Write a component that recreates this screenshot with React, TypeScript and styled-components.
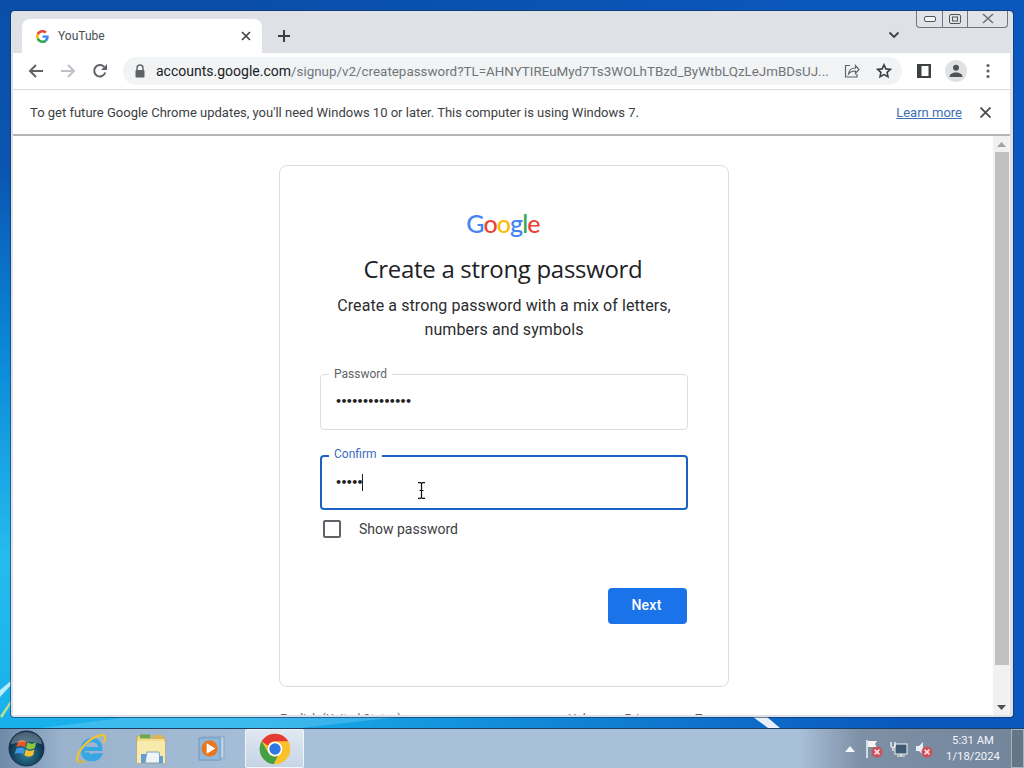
import React from "react";
import styled, { createGlobalStyle } from "styled-components";

const Global = createGlobalStyle`
  html, body { margin: 0; padding: 0; width: 1024px; height: 768px; overflow: hidden; }
  * { box-sizing: border-box; }
  body { font-family: "Roboto", "Liberation Sans", sans-serif; }
`;

const Desktop = styled.div`
  position: relative;
  width: 1024px;
  height: 768px;
  display: flex;
  flex-direction: column;
  overflow: hidden;
  background:
    linear-gradient(90deg, rgba(10,88,190,0) 22%, rgba(10,88,190,1) 88%),
    linear-gradient(180deg, #0a4ea8 0%, #0a55b0 22%, #0a86d6 45%, #25bbee 72%, #15aeea 100%);
`;
const Wallpaper = styled.svg`
  position: absolute;
  left: 0;
  top: 0;
`;
const WindowArea = styled.div`
  position: relative;
  flex: 1;
  min-height: 0;
  padding: 11px;
  display: flex;
`;
const Win = styled.div`
  position: relative;
  flex: 1;
  display: flex;
  flex-direction: column;
  padding: 0 3px 2px 2px;
  border-radius: 4px 4px 3px 3px;
  background: #dfe1e8;
  box-shadow: 0 0 0 1px rgba(20,50,90,.6);
  overflow: hidden;
`;
const TabStrip = styled.div`
  height: 42px;
  display: flex;
  align-items: flex-end;
  padding-left: 9px;
  background: #dee1e6;
  flex: none;
`;
const Tab = styled.div`
  width: 240px;
  height: 34px;
  background: #fff;
  border-radius: 8px 8px 0 0;
  display: flex;
  align-items: center;
  padding: 0 2px 0 14px;
  gap: 9px;
`;
const TabTitle = styled.span`
  flex: 1;
  font: 12px "Roboto", sans-serif;
  color: #4a4d50;
`;
const TabClose = styled.span`
  width: 28px;
  display: flex;
  justify-content: center;
`;
const NewTab = styled.span`
  margin-left: 8px;
  margin-bottom: 3px;
  width: 28px;
  height: 28px;
  display: flex;
  align-items: center;
  justify-content: center;
`;
const TabChevron = styled.span`
  margin-left: auto;
  margin-right: 110px;
  margin-bottom: 12px;
  display: flex;
`;
const WinControls = styled.div`
  position: absolute;
  top: 0;
  right: 5px;
  width: 92px;
  height: 17px;
  display: flex;
  border: 1px solid #6f7680;
  border-top: 0;
  border-radius: 0 0 4px 4px;
  background: rgba(225,228,233,.6);
`;
const WinBtn = styled.span<{ $w: number }>`
  width: ${p => p.$w}px;
  display: flex;
  align-items: center;
  justify-content: center;
  & + & { border-left: 1px solid #6f7680; }
`;
const Toolbar = styled.div`
  height: 37px;
  flex: none;
  background: #fff;
  display: flex;
  align-items: center;
  padding-left: 7px;
  border-bottom: 1px solid #dadce0;
`;
const NavBtn = styled.span`
  width: 32px;
  height: 28px;
  display: flex;
  align-items: center;
  justify-content: center;
`;
const Omnibox = styled.div`
  margin-left: 7px;
  width: 779px;
  height: 28px;
  border-radius: 14px;
  background: #f1f3f4;
  display: flex;
  align-items: center;
  padding-left: 11px;
`;
const Url = styled.span`
  margin-left: 10px;
  width: 674px;
  white-space: nowrap;
  overflow: hidden;
  font: 13.4px "Roboto", sans-serif;
  color: #70757a;
  & b { font-size: 14px; font-weight: 400; color: #202124; }
`;
const OmniIcons = styled.span`
  display: flex;
  align-items: center;
  gap: 16px;
  margin-left: 14px;
`;
const ToolIcons = styled.div`
  margin-left: 15px;
  display: flex;
  align-items: center;
  gap: 14px;
`;
const Avatar = styled.span`
  width: 22px;
  height: 22px;
  border-radius: 50%;
  background: #dfe1e5;
  display: flex;
  align-items: center;
  justify-content: center;
  overflow: hidden;
`;
const InfoBar = styled.div`
  height: 46px;
  flex: none;
  background: #fff;
  display: flex;
  align-items: center;
  padding: 0 19px 0 17px;
  border-bottom: 2px solid #b4b6ba;
  font: 13px "Roboto", sans-serif;
  color: #3c4043;
`;
const InfoText = styled.span`
  flex: 1;
`;
const LearnMore = styled.a`
  color: #3b6eb5;
  text-decoration: underline;
  margin-right: 18px;
`;
const Body = styled.div`
  flex: 1;
  min-height: 0;
  display: flex;
  background: #fff;
`;
const Page = styled.div`
  flex: 1;
  min-width: 0;
  overflow: hidden;
  padding: 29px 0 0 2px;
  display: flex;
  flex-direction: column;
  align-items: center;
`;
const Card = styled.div`
  width: 450px;
  height: 522px;
  flex: none;
  border: 1px solid #dadce0;
  border-radius: 8px;
  padding: 43px 40px 0;
  display: flex;
  flex-direction: column;
  align-items: center;
`;
const Logo = styled.div`
  font: 500 25px/28px "Lato", "Open Sans", sans-serif;
  letter-spacing: -0.9px;
  height: 28px;
  margin-right: 2px;
`;
const LogoLetter = styled.span<{ $c: string }>`
  color: ${p => p.$c};
`;
const Heading = styled.h1`
  margin: 16px 2px 0 0;
  font: 400 24px/32px "Open Sans", sans-serif;
  letter-spacing: -0.3px;
  color: #202124;
`;
const Sub = styled.p`
  margin: 9px 0 0;
  width: 368px;
  text-align: center;
  font: 16px/24px "Roboto", sans-serif;
  letter-spacing: 0.08px;
  color: #2b2c2f;
`;
const Field = styled.div<{ $focus?: boolean; $mt: number }>`
  position: relative;
  width: 368px;
  height: ${p => (p.$focus ? 55 : 56)}px;
  margin-top: ${p => p.$mt}px;
  flex: none;
  border: ${p => (p.$focus ? "2px solid #1a62c4" : "1px solid #dadce0")};
  border-radius: 4px;
  display: flex;
  align-items: center;
  padding-left: ${p => (p.$focus ? 13 : 14)}px;
`;
const FieldLabel = styled.label<{ $focus?: boolean }>`
  position: absolute;
  top: ${p => (p.$focus ? -10 : -8)}px;
  left: ${p => (p.$focus ? 7 : 8)}px;
  padding: 0 5px;
  background: #fff;
  font: 12px/14px "Roboto", sans-serif;
  color: ${p => (p.$focus ? "#3b6cc0" : "#5f6368")};
`;
const Dots = styled.span`
  font: 700 11px/16px "DejaVu Sans", sans-serif;
  letter-spacing: -1.65px;
  color: #202124;
`;
const Caret = styled.span`
  display: inline-block;
  width: 1px;
  height: 17px;
  margin-left: 0;
  background: #202124;
`;
const CheckRow = styled.div`
  width: 368px;
  margin-top: 10px;
  padding-left: 3px;
  display: flex;
  align-items: center;
  gap: 18px;
  font: 14px "Roboto", sans-serif;
  color: #3c4043;
`;
const CheckBox = styled.span`
  width: 18px;
  height: 18px;
  border: 2px solid #5f6368;
  border-radius: 2px;
`;
const Actions = styled.div`
  width: 368px;
  margin-top: 50px;
  display: flex;
  justify-content: flex-end;
  padding-right: 1px;
`;
const NextBtn = styled.button`
  width: 79px;
  height: 36px;
  border: 0;
  border-radius: 4px;
  background: #1a73e8;
  color: #fff;
  font: 500 14px "Roboto", sans-serif;
  letter-spacing: 0.25px;
  padding: 0 2px 2px 0;
`;
const Footer = styled.div`
  width: 450px;
  margin-top: 24px;
  flex: none;
  display: flex;
  font: 12px/16px "Roboto", sans-serif;
  color: #5f6368;
`;
const FooterLang = styled.span`
  flex: 1;
  padding-left: 1px;
`;
const FooterLinks = styled.span`
  display: flex;
  gap: 32px;
`;
const Scrollbar = styled.div`
  width: 17px;
  flex: none;
  background: #f1f1f1;
  display: flex;
  flex-direction: column;
  align-items: center;
`;
const ScrollArrow = styled.span`
  height: 16px;
  flex: none;
  display: flex;
  align-items: center;
  justify-content: center;
`;
const ScrollThumb = styled.div`
  width: 14px;
  flex: 1;
  margin-bottom: 34px;
  background: #c1c1c1;
`;
const Taskbar = styled.div`
  height: 40px;
  flex: none;
  display: flex;
  align-items: center;
  border-top: 1px solid #1d3f63;
  background: linear-gradient(90deg, #6d8aa8 0%, #9ab2cc 6%, #a9c0da 30%, #a9c0da 78%, #7d90a5 84%, #72859a 100%);
  position: relative;
`;
const Start = styled.span`
  width: 61px;
  height: 39px;
  display: flex;
  align-items: center;
  justify-content: center;
  padding-right: 9px;
`;
const TaskItem = styled.span<{ $active?: boolean }>`
  width: 60px;
  height: 39px;
  display: flex;
  align-items: center;
  justify-content: center;
  ${p => p.$active && `
    width: 59px;
    margin-left: 4px;
    background: linear-gradient(180deg, rgba(255,255,255,.65), rgba(255,255,255,.35));
    border: 1px solid rgba(245,250,255,.8);
    border-radius: 2px;
  `}
`;
const Tray = styled.div`
  margin-left: auto;
  display: flex;
  align-items: center;
  height: 39px;
`;
const TrayIcons = styled.span`
  display: flex;
  align-items: center;
  gap: 7px;
  margin-right: 9px;
`;
const TrayArrow = styled.svg`
  margin-right: 3px;
`;
const Clock = styled.div`
  width: 62px;
  text-align: center;
  font: 11.3px/16px "Roboto", "Open Sans", sans-serif;
  color: #f3f6fa;
  margin-right: 7px;
`;
const ShowDesktop = styled.span`
  width: 13px;
  height: 39px;
  border: 1px solid rgba(220,230,240,.55);
  background: rgba(90,105,122,.55);
`;
const Cursor = styled.svg`
  position: absolute;
  left: 417px;
  top: 482px;
`;

const GLogo = ({ size = 13 }: { size?: number }) => (
  <svg width={size} height={size} viewBox="0 0 48 48">
    <path fill="#EA4335" d="M24 9.500c3.500 0 6.700 1.300 9.100 3.500l6.800-6.800C35.800 2.400 30.300 0 24 0 14.600 0 6.500 5.400 2.600 13.200l7.900 6.100C12.400 13.700 17.700 9.500 24 9.500z" />
    <path fill="#4285F4" d="M46.900 24.500c0-1.600-.1-3.100-.4-4.500H24v9h12.900c-.6 3-2.200 5.500-4.700 7.200l7.700 6c4.500-4.200 7-10.300 7-17.700z" />
    <path fill="#FBBC05" d="M10.500 28.700c-.5-1.400-.8-3-.8-4.700s.3-3.200.8-4.700l-7.900-6.100C.9 16.500 0 20.100 0 24s.9 7.500 2.600 10.800l7.900-6.100z" />
    <path fill="#34A853" d="M24 48c6.500 0 11.900-2.100 15.900-5.800l-7.700-6c-2.200 1.500-4.900 2.300-8.200 2.300-6.300 0-11.600-4.200-13.500-9.800l-7.900 6.100C6.500 42.600 14.600 48 24 48z" />
  </svg>
);
const Stroke = ({ d, c = "#5f6368", w = 2, s = 16, vb = 16 }: { d: string; c?: string; w?: number; s?: number; vb?: number }) => (
  <svg width={s} height={s} viewBox={`0 0 ${vb} ${vb}`} fill="none" stroke={c} strokeWidth={w}>
    <path d={d} />
  </svg>
);
const ChromeLogo = () => (
  <svg width="32" height="32" viewBox="0 0 48 48">
    <circle cx="24" cy="24" r="23" fill="#fbc02d" />
    <path fill="#e53935" d="M24 1a23 23 0 0 1 20 11.500H24a11.500 11.500 0 0 0-10.500 6.800L4 12.500A23 23 0 0 1 24 1z" />
    <path fill="#43a047" d="M14 29.500a11.500 11.500 0 0 0 14 5.500l-6 11.900A23 23 0 0 1 4 12.500z" />
    <circle cx="24" cy="24" r="11" fill="#fff" />
    <circle cx="24" cy="24" r="8.500" fill="#2f78e4" />
  </svg>
);
const Orb = () => (
  <svg width="37" height="37" viewBox="0 0 38 38">
    <defs>
      <radialGradient id="orb" cx="50%" cy="65%" r="60%">
        <stop offset="0" stopColor="#2f7f9c" />
        <stop offset="1" stopColor="#06243d" />
      </radialGradient>
    </defs>
    <circle cx="19" cy="19" r="18" fill="url(#orb)" stroke="#1a3350" />
    <path d="M10 12c3-2 6-2 9 0l-1.500 6c-3-2-6-2-9 0z" fill="#e2572c" />
    <path d="M20 12.500c3 2 6 2 9 0l-1.500 6c-3 2-6 2-9 0z" fill="#8cc63f" />
    <path d="M8.300 19.500c3-2 6-2 9 0L16 25c-3-2-6-2-9 0z" fill="#3a9be0" />
    <path d="M18.300 20c3 2 6 2 9 0l-1.500 6c-3 2-6 2-9 0z" fill="#f6c02c" />
    <path d="M3 15a16 13 0 0 1 32 0c-8-4-24-4-32 0z" fill="#fff" opacity=".28" />
  </svg>
);
const IELogo = () => (
  <svg width="32" height="32" viewBox="0 0 34 34" fill="none">
    <path d="M8 17h19c0-6-3.500-9.500-9-9.500-6 0-10 4.500-10 10.500s4 10 10 10c4 0 7-1.500 8.500-4.500h-6c-1 1-2 1.200-3 1.200-2.500 0-4.500-1.700-4.500-4" stroke="#36a7e2" strokeWidth="4.200" />
    <path d="M3 30C0 26 8 11 20 5c6-3 11-4 12-1 .8 2-1 5-2 6" stroke="#f1c232" strokeWidth="2.400" />
    <path d="M3 30c1 2 5 1 8-1" stroke="#e3b32a" strokeWidth="2" />
  </svg>
);
const Explorer = () => (
  <svg width="32" height="30" viewBox="0 0 32 30">
    <path d="M2 2h11l1.500 2H30v25H2z" fill="#f3dd8a" stroke="#c9a94a" />
    <path d="M5 .5h10v4H5z" fill="#6fa84a" />
    <path d="M17 1h11v4H17z" fill="#d8b75a" />
    <path d="M2 7h28v22H2z" fill="#f8e9ac" />
    <path d="M6 20h6v9H6z" fill="#5f9fd3" />
    <path d="M12 18h12l2 11H10z" fill="#eef4f8" stroke="#7ea3bd" />
    <path d="M24 22h4v7h-4z" fill="#5f9fd3" />
  </svg>
);
const Media = () => (
  <svg width="27" height="27" viewBox="0 0 28 28">
    <rect x="5" y="2" width="22" height="22" fill="#b9d2e8" stroke="#86a8c8" />
    <rect x="1" y="3" width="22" height="23" fill="#8fb8dc" stroke="#6d97bd" />
    <circle cx="12" cy="14" r="8.500" fill="#e8771f" />
    <path d="M9 8.500l9 5.500-9 5.500z" fill="#fff" />
  </svg>
);
const RedX = ({ x, y }: { x: number; y: number }) => (
  <g transform={`translate(${x} ${y})`}>
    <circle r="5.500" fill="#cf4f58" />
    <path d="M-2.400-2.400l4.800 4.800M2.400-2.400l-4.800 4.800" stroke="#f6e3e3" strokeWidth="1.500" />
  </g>
);

export default function App() {
  return (
    <Desktop>
      <Global />
      <Wallpaper width="1024" height="728" viewBox="0 0 1024 728">
        <path d="M0 690 L12 680 L12 684 L0 697z" fill="#d8f4ff" opacity=".85" />
        <path d="M0 716 L11 700 L11 704 L2 718z" fill="#cfe88a" opacity=".85" />
        <path d="M753 717h14l13 11h-12z" fill="#fff" opacity=".9" />
        <path d="M40 728 L130 717 H400 L300 728z" fill="#7fd0f7" opacity=".35" />
      </Wallpaper>
      <WindowArea>
        <Win>
          <TabStrip>
            <Tab>
              <GLogo />
              <TabTitle>YouTube</TabTitle>
              <TabClose>
                <Stroke s={10} vb={10} w={1.6} c="#3c4043" d="M1 1l8 8M9 1l-8 8" />
              </TabClose>
            </Tab>
            <NewTab>
              <Stroke s={12} vb={12} w={2} c="#3c4043" d="M6 0v12M0 6h12" />
            </NewTab>
            <TabChevron>
              <Stroke s={12} vb={12} w={1.800} c="#3c4043" d="M1.500 3.500L6 8l4.500-4.500" />
            </TabChevron>
          </TabStrip>
          <WinControls>
            <WinBtn $w={25}>
              <svg width="12" height="6" viewBox="0 0 12 6" fill="#f3f4f6" stroke="#555"><rect x=".5" y=".5" width="11" height="5" rx="1.500" /></svg>
            </WinBtn>
            <WinBtn $w={25}>
              <svg width="12" height="10" viewBox="0 0 12 10" fill="none" stroke="#555"><rect x=".5" y=".5" width="11" height="9" rx="1.500" /><rect x="3.500" y="3" width="5" height="4" /></svg>
            </WinBtn>
            <WinBtn $w={40}>
              <Stroke s={12} vb={12} w={1.500} c="#6b6f75" d="M1 1l10 9M11 1L1 10" />
            </WinBtn>
          </WinControls>
          <Toolbar>
            <NavBtn>
              <Stroke s={16} c="#5f6368" d="M15 8H2M8 2L2 8l6 6" />
            </NavBtn>
            <NavBtn>
              <Stroke s={16} c="#bdc1c6" d="M1 8h13M8 2l6 6-6 6" />
            </NavBtn>
            <NavBtn>
              <svg width="16" height="16" viewBox="0 0 16 16" fill="none">
                <path d="M13.300 9.500A5.700 5.700 0 1 1 12 3.800" stroke="#5f6368" strokeWidth="2" />
                <path d="M15 1v6H9z" fill="#5f6368" />
              </svg>
            </NavBtn>
            <Omnibox>
              <svg width="12" height="14" viewBox="0 0 12 14">
                <path d="M3 6V4a3 3 0 0 1 6 0v2" stroke="#5f6368" strokeWidth="1.400" fill="none" />
                <rect x="1.500" y="6" width="9" height="7.500" rx="1" fill="#5f6368" />
              </svg>
              <Url><b>accounts.google.com</b>/signup/v2/createpassword?TL=AHNYTIREuMyd7Ts3WOLhTBzd_ByWtbLQzLeJmBDsUJ...</Url>
              <OmniIcons>
                <svg width="16" height="16" viewBox="0 0 16 16" fill="none" stroke="#5f6368" strokeWidth="1.200">
                  <path d="M6 2.500H1.500v11.500h11.500v-3" />
                  <path d="M4.500 11c.5-4 3-6 7-6V2.500L15 6.500l-3.500 4V8C8.500 8 6 9 4.500 11z" />
                </svg>
                <svg width="16" height="16" viewBox="0 0 16 16" fill="none" stroke="#3c4043" strokeWidth="1.600">
                  <path d="M8 1.800l1.900 4.100 4.500.5-3.300 3 .9 4.400L8 11.600l-4 2.200.9-4.400-3.300-3 4.500-.5z" />
                </svg>
              </OmniIcons>
            </Omnibox>
            <ToolIcons>
              <svg width="14" height="14" viewBox="0 0 14 14">
                <rect x="0" y="0" width="14" height="14" fill="#3c4043" />
                <rect x="4.500" y="2" width="7" height="10" fill="#fff" />
              </svg>
              <Avatar>
                <svg width="14" height="14" viewBox="0 0 14 14" fill="#4f5358">
                  <circle cx="7" cy="3.800" r="3" />
                  <path d="M.5 13c0-3 3-4.500 6.500-4.500s6.500 1.500 6.500 4.500z" />
                </svg>
              </Avatar>
              <svg width="14" height="16" viewBox="0 0 14 16" fill="#5f6368">
                <circle cx="7" cy="2.500" r="1.600" /><circle cx="7" cy="8" r="1.600" /><circle cx="7" cy="13.500" r="1.600" />
              </svg>
            </ToolIcons>
          </Toolbar>
          <InfoBar>
            <InfoText>To get future Google Chrome updates, you'll need Windows 10 or later. This computer is using Windows 7.</InfoText>
            <LearnMore>Learn more</LearnMore>
            <Stroke s={11} vb={11} w={1.800} c="#4a4d50" d="M.5.5l10 10M10.500.5l-10 10" />
          </InfoBar>
          <Body>
            <Page>
              <Card>
                <Logo>
                  <LogoLetter $c="#4285f4">G</LogoLetter>
                  <LogoLetter $c="#ea4335">o</LogoLetter>
                  <LogoLetter $c="#fbbc05">o</LogoLetter>
                  <LogoLetter $c="#4285f4">g</LogoLetter>
                  <LogoLetter $c="#34a853">l</LogoLetter>
                  <LogoLetter $c="#ea4335">e</LogoLetter>
                </Logo>
                <Heading>Create a strong password</Heading>
                <Sub>Create a strong password with a mix of letters, numbers and symbols</Sub>
                <Field $mt={32}>
                  <FieldLabel>Password</FieldLabel>
                  <Dots>••••••••••••••</Dots>
                </Field>
                <Field $mt={25} $focus>
                  <FieldLabel $focus>Confirm</FieldLabel>
                  <Dots>•••••</Dots>
                  <Caret />
                </Field>
                <CheckRow>
                  <CheckBox />
                  Show password
                </CheckRow>
                <Actions>
                  <NextBtn>Next</NextBtn>
                </Actions>
              </Card>
              <Footer>
                <FooterLang>English (United States)</FooterLang>
                <FooterLinks>
                  <span>Help</span><span>Privacy</span><span>Terms</span>
                </FooterLinks>
              </Footer>
            </Page>
            <Scrollbar>
              <ScrollArrow>
                <svg width="9" height="5" viewBox="0 0 9 5" fill="#a3a3a3"><path d="M4.500 0L9 5H0z" /></svg>
              </ScrollArrow>
              <ScrollThumb />
              <ScrollArrow>
                <svg width="9" height="5" viewBox="0 0 9 5" fill="#505050"><path d="M0 0h9L4.500 5z" /></svg>
              </ScrollArrow>
            </Scrollbar>
          </Body>
        </Win>
      </WindowArea>
      <Taskbar>
        <Start><Orb /></Start>
        <TaskItem><IELogo /></TaskItem>
        <TaskItem><Explorer /></TaskItem>
        <TaskItem><Media /></TaskItem>
        <TaskItem $active><ChromeLogo /></TaskItem>
        <Tray>
          <TrayIcons>
            <TrayArrow width="10" height="6" viewBox="0 0 10 6" fill="#f3f6fa"><path d="M5 0l5 6H0z" /></TrayArrow>
            <svg width="18" height="20" viewBox="0 0 18 20">
              <path d="M2 1v18" stroke="#f5f5f5" strokeWidth="1.500" />
              <path d="M3 2h9l-2 3 2 3H3z" fill="#f5f5f5" />
              <RedX x={12} y={13} />
            </svg>
            <svg width="18" height="18" viewBox="0 0 18 18" fill="none" stroke="#f5f5f5">
              <rect x="5" y="4" width="12" height="10" fill="#3f5a73" />
              <path d="M7 16h8M11 14v2" />
              <path d="M1 2v4c0 2 4 2 4 0V2M3 8v3" strokeWidth="1.300" />
            </svg>
            <svg width="18" height="20" viewBox="0 0 18 20">
              <path d="M1 7h3l4-4v13l-4-4H1z" fill="#e8edf2" />
              <RedX x={12} y={13} />
            </svg>
          </TrayIcons>
          <Clock>5:31 AM<br />1/18/2024</Clock>
          <ShowDesktop />
        </Tray>
      </Taskbar>
      <Cursor width="9" height="17" viewBox="0 0 9 17" fill="none" stroke="#111" strokeWidth="1.200">
        <path d="M1 .6h2.500l1 1 1-1H8M4.500 1.600v13.800M1 16.400h2.500l1-1 1 1H8M2.500 8.500h4" />
      </Cursor>
    </Desktop>
  );
}
